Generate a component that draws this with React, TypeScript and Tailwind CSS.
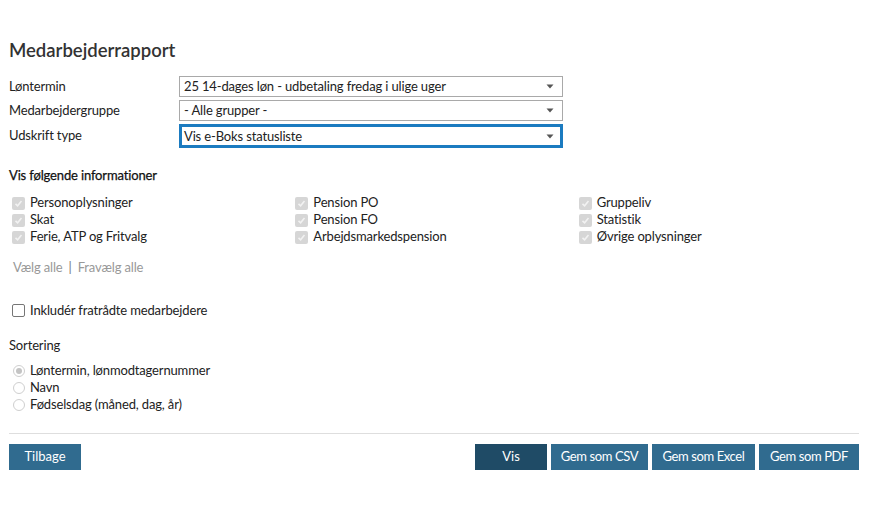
import React from "react";

function Caret() {
  return (
    <svg width="8" height="5" viewBox="0 0 8 5" className="shrink-0">
      <path d="M0.5 0.5 L7.5 0.5 L4 4.5 Z" fill="#555" />
    </svg>
  );
}

function Select({ value, focused }: { value: string; focused?: boolean }) {
  return (
    <div
      className={
        focused
          ? "flex h-[24px] w-[384px] items-center justify-between border-[3px] border-[#1b7bc0] bg-white pl-[2px] pr-[6px]"
          : "flex h-[21px] w-[384px] items-center justify-between border border-[#a9a9a9] bg-white pl-[4px] pr-[8px]"
      }
    >
      <span className="text-[13px] leading-none tracking-[-0.15px] text-[#222]">{value}</span>
      <Caret />
    </div>
  );
}

function CheckedBox() {
  return (
    <span className="ml-[3px] mr-[5px] inline-flex h-[13px] w-[13px] shrink-0 items-center justify-center rounded-[2px] bg-[#d6d6d6]">
      <svg width="9" height="9" viewBox="0 0 9 9">
        <path d="M1.5 4.8 L3.6 6.8 L7.5 2" stroke="#f2f2f2" strokeWidth="1.6" fill="none" />
      </svg>
    </span>
  );
}

function CheckItem({ label }: { label: string }) {
  return (
    <div className="flex h-[17px] items-center text-[13px] tracking-[-0.15px] text-[#222]">
      <CheckedBox />
      <span>{label}</span>
    </div>
  );
}

function Radio({ checked, label }: { checked?: boolean; label: string }) {
  return (
    <div className="flex h-[17px] items-center text-[13px] tracking-[-0.15px] text-[#222]">
      <span className="ml-[4px] mr-[5px] inline-flex h-[12px] w-[12px] items-center justify-center rounded-full border border-[#cfcfcf] bg-white">
        {checked && <span className="h-[6px] w-[6px] rounded-full bg-[#c4c4c4]" />}
      </span>
      <span>{label}</span>
    </div>
  );
}

export default function App() {
  const font = { fontFamily: "Lato, 'Open Sans', sans-serif" };
  return (
    <div className="min-h-[516px] w-[877px] bg-white text-[#333]" style={font}>
      <div className="w-[859px] pl-[9px] pt-[39px]">
        <h1 className="text-[18.5px] font-semibold leading-[22px] text-[#333]">Medarbejderrapport</h1>

        <div className="mt-[15px] flex flex-col gap-[3px]">
          <div className="flex items-center">
            <div className="w-[170px] text-[13px] tracking-[-0.15px] text-[#222]">Løntermin</div>
            <Select value="25 14-dages løn - udbetaling fredag i ulige uger" />
          </div>
          <div className="flex items-center">
            <div className="w-[170px] text-[13px] tracking-[-0.15px] text-[#222]">Medarbejdergruppe</div>
            <Select value="- Alle grupper -" />
          </div>
          <div className="flex items-center">
            <div className="w-[170px] text-[13px] tracking-[-0.15px] text-[#222]">Udskrift type</div>
            <Select value="Vis e-Boks statusliste" focused />
          </div>
        </div>

        <div className="mt-[18px] text-[13px] tracking-[-0.15px] text-[#111] [-webkit-text-stroke:0.25px_#111]">Vis følgende informationer</div>

        <div className="mt-[9px] grid grid-cols-3">
          <div className="flex flex-col">
            <CheckItem label="Personoplysninger" />
            <CheckItem label="Skat" />
            <CheckItem label="Ferie, ATP og Fritvalg" />
          </div>
          <div className="flex flex-col">
            <CheckItem label="Pension PO" />
            <CheckItem label="Pension FO" />
            <CheckItem label="Arbejdsmarkedspension" />
          </div>
          <div className="flex flex-col">
            <CheckItem label="Gruppeliv" />
            <CheckItem label="Statistik" />
            <CheckItem label="Øvrige oplysninger" />
          </div>
        </div>

        <div className="mt-[12px] flex items-center pl-[4px] text-[13px] tracking-[-0.15px] text-[#999]">
          <span>Vælg alle</span>
          <span className="mx-[6px] text-[#777]">|</span>
          <span>Fravælg alle</span>
        </div>

        <div className="mt-[25px] flex h-[17px] items-center text-[13px] tracking-[-0.15px] text-[#222]">
          <span className="ml-[3px] mr-[5px] inline-block h-[13px] w-[13px] rounded-[2px] border border-[#767676] bg-white" />
          <span>Inkludér fratrådte medarbejdere</span>
        </div>

        <div className="mt-[17px] text-[13px] tracking-[-0.15px] text-[#222]">Sortering</div>

        <div className="mt-[7px] flex flex-col">
          <Radio checked label="Løntermin, lønmodtagernummer" />
          <Radio label="Navn" />
          <Radio label="Fødselsdag (måned, dag, år)" />
        </div>

        <div className="mt-[19px] border-t border-[#dedede]" />

        <div className="mt-[10px] flex items-center justify-between">
          <button className="h-[26px] w-[72px] bg-[#306b8f] text-[13px] text-white">Tilbage</button>
          <div className="flex gap-[4px]">
            <button className="h-[26px] w-[72px] bg-[#1f4b66] text-[13px] text-white">Vis</button>
            <button className="h-[26px] w-[97px] bg-[#306b8f] text-[13px] tracking-[-0.4px] text-white">Gem som CSV</button>
            <button className="h-[26px] w-[103px] bg-[#306b8f] text-[13px] tracking-[-0.4px] text-white">Gem som Excel</button>
            <button className="h-[26px] w-[100px] bg-[#306b8f] text-[13px] tracking-[-0.4px] text-white">Gem som PDF</button>
          </div>
        </div>
      </div>
    </div>
  );
}
